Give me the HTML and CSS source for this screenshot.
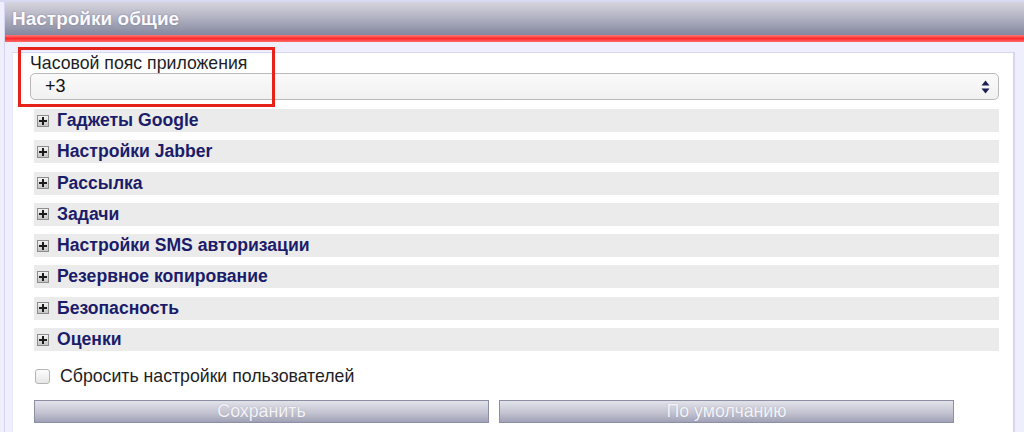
FILE: index.html
```html
<!DOCTYPE html>
<html>
<head>
    <title>Настройки общие</title>
    <meta charset="utf-8">
    <link rel="stylesheet" href="styles.css">
</head>
<body>
    <div class="top-strip"></div>
    <div class="wrapper">
        <div class="header">
            <h2>Настройки общие</h2>
        </div>
        <div class="red-line"></div>
        <div class="band"></div>

        <div class="panel">
            <div class="tz-field">
                <label class="tz-label">Часовой пояс приложения</label>
                <div class="select">
                    <span>+3</span>
                    <svg class="arrows" width="9" height="14" viewBox="0 0 9 14">
                        <path d="M4.5 0.5 L8.5 5.5 L0.5 5.5 Z" fill="#1b1d55"/>
                        <path d="M4.5 13.5 L8.5 8.5 L0.5 8.5 Z" fill="#1b1d55"/>
                    </svg>
                </div>
            </div>

            <div class="groups">
                <div class="group"><span class="plus"></span>Гаджеты Google</div>
                <div class="group"><span class="plus"></span>Настройки Jabber</div>
                <div class="group"><span class="plus"></span>Рассылка</div>
                <div class="group"><span class="plus"></span>Задачи</div>
                <div class="group"><span class="plus"></span>Настройки SMS авторизации</div>
                <div class="group"><span class="plus"></span>Резервное копирование</div>
                <div class="group"><span class="plus"></span>Безопасность</div>
                <div class="group"><span class="plus"></span>Оценки</div>
            </div>

            <div class="reset">
                <span class="checkbox"></span>
                <span>Сбросить настройки пользователей</span>
            </div>

            <div class="buttons">
                <button type="button" class="btn">Сохранить</button>
                <button type="button" class="btn">По умолчанию</button>
            </div>
        </div>
    </div>

    <div class="highlight"></div>
</body>
</html>
```

FILE: styles.css
```css
html, body {
    margin: 0;
}

body {
    font-family: "Liberation Sans", Arial, sans-serif;
    background: #eeeefc;
    width: 1024px;
    height: 432px;
    overflow: hidden;
    position: relative;
}

.top-strip {
    height: 2px;
    background: #d9d9f2;
}

.wrapper {
    margin-left: 4px;
    border-left: 1px solid #d6d6f4;
}

.header {
    height: 33px;
    background: linear-gradient(#d6d5de, #b4b4c4 45%, #84879e);
    display: flex;
    align-items: center;
}

.header h2 {
    margin: 0 0 0 7px;
    font-size: 19px;
    font-weight: bold;
    color: #fbfbff;
    text-shadow: 0 0 2px rgba(90, 90, 120, 0.6);
}

.red-line {
    height: 7px;
    background: linear-gradient(#ff7a7a, #ff2b2b 50%, #ff6a6a);
}

.band {
    height: 10px;
    background: #eeeefc;
}

.panel {
    background: #fff;
    margin-left: 7px;
    margin-right: 9px;
    border-top: 1px solid #d6d6f4;
    border-left: 1px solid #e8e8f8;
    border-right: 2px solid #d6d6f4;
    padding: 0 14px 12px 17px;
    height: 380px;
    box-sizing: border-box;
}

.tz-field {
    padding-top: 1px;
}

.tz-label {
    display: block;
    font-size: 17.7px;
    line-height: 19px;
    color: #1e1e24;
}

.select {
    height: 27px;
    box-sizing: border-box;
    border: 1px solid #b9b9b9;
    border-radius: 5px;
    background: linear-gradient(#fafafa, #f1f1f1);
    display: flex;
    align-items: center;
    justify-content: space-between;
    padding: 0 8px 0 14px;
    font-size: 18px;
    color: #111;
}

.groups {
    margin-top: 9px;
    padding-left: 4px;
    display: flex;
    flex-direction: column;
    gap: 8.3px;
}

.group {
    height: 23px;
    background: #ebebeb;
    display: flex;
    align-items: center;
    padding-left: 3px;
    font-size: 17.6px;
    font-weight: bold;
    color: #1b1c6a;
}

.plus {
    width: 12px;
    height: 12px;
    box-sizing: border-box;
    border: 1px solid #8c8c8c;
    background: linear-gradient(#f4f4f4, #c4c4c4);
    margin-right: 8px;
    position: relative;
}

.plus::before,
.plus::after {
    content: "";
    position: absolute;
    background: #1c1c1c;
}

.plus::before {
    left: 1px;
    top: 4px;
    width: 8px;
    height: 2px;
}

.plus::after {
    left: 4px;
    top: 1px;
    width: 2px;
    height: 8px;
}

.reset {
    margin-top: 15px;
    padding-left: 5px;
    height: 20px;
    display: flex;
    align-items: center;
    font-size: 17.7px;
    color: #1e1e24;
}

.checkbox {
    width: 15px;
    height: 15px;
    box-sizing: border-box;
    border: 1px solid #b5b5b5;
    border-radius: 3px;
    background: linear-gradient(#fdfdfd, #e6e6e6);
    margin-right: 10px;
}

.buttons {
    margin-top: 14px;
    padding-left: 4px;
    display: flex;
    gap: 10px;
}

.btn {
    width: 455px;
    height: 23px;
    border: 1px solid #8c8ea4;
    background: linear-gradient(#e2e2ea, #c4c4d2 55%, #a0a1b6);
    color: #f4f4f8;
    font-family: "Liberation Sans", Arial, sans-serif;
    font-size: 17.8px;
    line-height: 21px;
    text-shadow: 0 0 1px rgba(120, 120, 140, 0.5);
    padding: 0;
}

.highlight {
    position: absolute;
    left: 18px;
    top: 47px;
    width: 257px;
    height: 60px;
    box-sizing: border-box;
    border: 3px solid #e6221b;
}
```
